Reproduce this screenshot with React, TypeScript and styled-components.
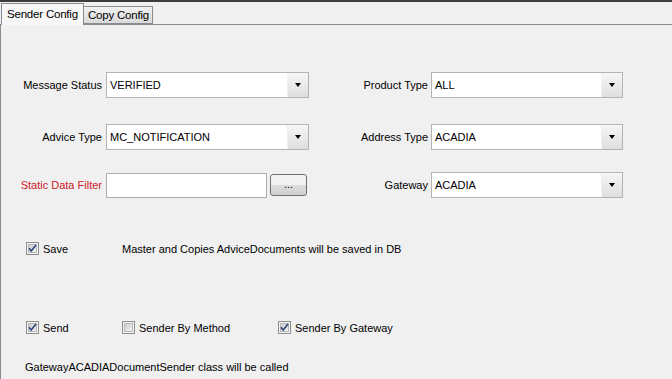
import styled, { createGlobalStyle } from 'styled-components';

const GlobalStyle = createGlobalStyle`
  html, body {
    margin: 0;
    padding: 0;
    background: #f0f0f0;
  }
  body {
    font-family: 'Liberation Sans', Arial, sans-serif;
    font-size: 11px;
    color: #000;
  }
`;

const Frame = styled.div`
  display: flex;
  flex-direction: column;
  width: 672px;
  height: 379px;
  border-top: 2px solid #3d3d3d;
  box-sizing: border-box;
  background: #f0f0f0;
  overflow: hidden;
`;

const TabStrip = styled.div`
  display: flex;
  align-items: flex-end;
  height: 23px;
  padding-left: 1px;
  border-bottom: 1px solid #898c95;
  box-sizing: border-box;
`;

const Tab = styled.div<{ $active?: boolean }>`
  display: flex;
  align-items: center;
  box-sizing: border-box;
  height: ${(p) => (p.$active ? '22px' : '18px')};
  margin-bottom: ${(p) => (p.$active ? '-1px' : '0')};
  padding: ${(p) => (p.$active ? '0 5px 1px 5px' : '0 3px 0 4px')};
  border: 1px solid #898c95;
  border-bottom: ${(p) => (p.$active ? 'none' : '1px solid #898c95')};
  margin-left: ${(p) => (p.$active ? '0' : '-1px')};
  background: ${(p) =>
    p.$active ? '#f7f7f7' : 'linear-gradient(#f2f2f2, #dadada)'};
  font-size: 11.5px;
  letter-spacing: -0.2px;
  white-space: nowrap;
  z-index: ${(p) => (p.$active ? 1 : 0)};
`;

const Panel = styled.div`
  flex: 1;
  display: flex;
  flex-direction: column;
  border-left: 1px solid #898c95;
  padding-top: 47px;
`;

const FormRow = styled.div<{ $top: number }>`
  display: grid;
  grid-template-columns: 105px 203px 122px 192px;
  align-items: center;
  height: 26px;
  margin-top: ${(p) => p.$top}px;
`;

const Label = styled.div<{ $red?: boolean; $pad: number }>`
  text-align: right;
  padding-right: ${(p) => p.$pad}px;
  color: ${(p) => (p.$red ? '#d0202a' : '#000')};
  white-space: nowrap;
`;

const Combo = styled.div`
  display: flex;
  align-items: stretch;
  height: 26px;
  box-sizing: border-box;
  border: 1px solid #b4b4b4;
  background: #fff;
`;

const ComboText = styled.div`
  flex: 1;
  display: flex;
  align-items: center;
  padding-left: 3px;
`;

const ComboArrow = styled.div`
  width: 20px;
  display: flex;
  align-items: center;
  justify-content: center;
  background: linear-gradient(#f6f6f6, #dedede);
  border-left: 1px solid #f2f2f2;

  &::after {
    content: '';
    border-left: 3.5px solid transparent;
    border-right: 3.5px solid transparent;
    border-top: 4px solid #000;
  }
`;

const FilterCell = styled.div`
  display: flex;
  align-items: center;
  gap: 3px;
`;

const TextField = styled.div`
  width: 161px;
  height: 25px;
  box-sizing: border-box;
  border: 1px solid #abadb3;
  background: #fff;
`;

const DotsButton = styled.div`
  width: 37px;
  height: 22px;
  box-sizing: border-box;
  border: 1px solid #707070;
  border-radius: 3px;
  background: linear-gradient(#f2f2f2 50%, #dddddd 50%, #cfcfcf);
  display: flex;
  align-items: center;
  justify-content: center;
  padding-bottom: 2px;
  font-size: 11px;
`;

const CheckRow = styled.div<{ $top: number }>`
  display: grid;
  grid-template-columns: 96px 156px auto;
  align-items: center;
  padding-left: 25px;
  margin-top: ${(p) => p.$top}px;
`;

const CheckItem = styled.div`
  display: flex;
  align-items: center;
  gap: 4px;
  white-space: nowrap;
`;

const Note = styled.div`
  white-space: nowrap;
`;

const Footer = styled.div`
  padding-left: 24px;
  margin-top: 27px;
`;

const CheckBox = ({ checked }: { checked: boolean }) => (
  <svg width="13" height="13" viewBox="0 0 13 13">
    <defs>
      <linearGradient id="cbFill" x1="0" y1="0" x2="1" y2="1">
        <stop offset="0" stopColor="#cbcbcb" />
        <stop offset="1" stopColor="#f6f6f6" />
      </linearGradient>
    </defs>
    <rect x="0.5" y="0.5" width="12" height="12" fill="#f4f4f4" stroke="#8e8f8f" />
    <rect x="2.5" y="2.5" width="8" height="8" fill="url(#cbFill)" stroke="#b9b9b9" />
    {checked && (
      <path d="M3 6.3 L5.2 9 L10 3" fill="none" stroke="#31477e" strokeWidth="1.7" />
    )}
  </svg>
);

const ComboBox = ({ value }: { value: string }) => (
  <Combo>
    <ComboText>{value}</ComboText>
    <ComboArrow />
  </Combo>
);

export default function App() {
  return (
    <>
      <GlobalStyle />
      <Frame>
        <TabStrip>
          <Tab $active>Sender Config</Tab>
          <Tab>Copy Config</Tab>
        </TabStrip>
        <Panel>
          <FormRow $top={0}>
            <Label $pad={4}>Message Status</Label>
            <ComboBox value="VERIFIED" />
            <Label $pad={3}>Product Type</Label>
            <ComboBox value="ALL" />
          </FormRow>
          <FormRow $top={26}>
            <Label $pad={4}>Advice Type</Label>
            <ComboBox value="MC_NOTIFICATION" />
            <Label $pad={3}>Address Type</Label>
            <ComboBox value="ACADIA" />
          </FormRow>
          <FormRow $top={22}>
            <Label $pad={4} $red>
              Static Data Filter
            </Label>
            <FilterCell>
              <TextField />
              <DotsButton>...</DotsButton>
            </FilterCell>
            <Label $pad={3}>Gateway</Label>
            <ComboBox value="ACADIA" />
          </FormRow>

          <CheckRow $top={44}>
            <CheckItem>
              <CheckBox checked />
              Save
            </CheckItem>
            <Note>Master and Copies AdviceDocuments will be saved in DB</Note>
          </CheckRow>

          <CheckRow $top={66}>
            <CheckItem>
              <CheckBox checked />
              Send
            </CheckItem>
            <CheckItem>
              <CheckBox checked={false} />
              Sender By Method
            </CheckItem>
            <CheckItem>
              <CheckBox checked />
              Sender By Gateway
            </CheckItem>
          </CheckRow>

          <Footer>GatewayACADIADocumentSender class will be called</Footer>
        </Panel>
      </Frame>
    </>
  );
}
